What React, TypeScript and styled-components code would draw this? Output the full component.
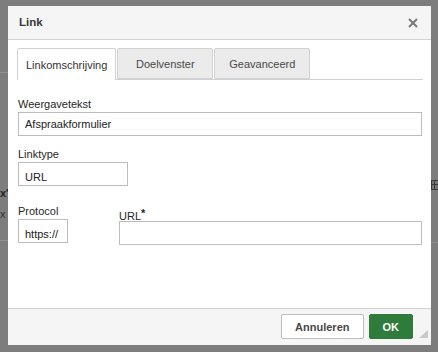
import React from "react";
import styled, { createGlobalStyle } from "styled-components";

const Global = createGlobalStyle`
  html, body { margin: 0; padding: 0; }
  body {
    background: #7d7d7d;
    font-family: "Liberation Sans", Arial, Helvetica, sans-serif;
    font-size: 11px;
    color: #262626;
    width: 438px;
    height: 352px;
    overflow: hidden;
    position: relative;
  }
`;

const Backdrop = styled.div`
  position: absolute;
  inset: 0;
  pointer-events: none;
`;

const BgLine = styled.div<{ $top: number; $left: number; $width: number }>`
  position: absolute;
  top: ${(p) => p.$top}px;
  left: ${(p) => p.$left}px;
  width: ${(p) => p.$width}px;
  height: 1px;
  background: #8e8e8e;
`;

const BgGlyph = styled.span<{ $top: number; $left: number; $bold?: boolean }>`
  position: absolute;
  top: ${(p) => p.$top}px;
  left: ${(p) => p.$left}px;
  font-size: 11px;
  font-weight: ${(p) => (p.$bold ? "bold" : "normal")};
  color: ${(p) => (p.$bold ? "#222" : "#333")};
  line-height: 1;
`;

const Page = styled.div`
  position: relative;
  padding: 6px 0 0 8px;
`;

const Dialog = styled.div`
  width: 423px;
  height: 339px;
  background: #fff;
  display: flex;
  flex-direction: column;
  position: relative;
  box-sizing: border-box;
`;

const Header = styled.div`
  height: 34px;
  box-sizing: border-box;
  background: #f5f5f5;
  border-bottom: 1px solid #d1d1d1;
  display: flex;
  align-items: center;
  justify-content: space-between;
  padding: 0 13px 0 11px;
`;

const Title = styled.div`
  font-weight: bold;
  font-size: 11.5px;
  color: #383838;
  padding-bottom: 1px;
`;

const Close = styled.div`
  width: 10px;
  height: 10px;
  display: flex;
  align-items: center;
  justify-content: center;
  margin-top: 1px;
`;

const Body = styled.div`
  flex: 1;
  padding: 8px 9px 0 10px;
`;

const TabBar = styled.div`
  display: flex;
  border-bottom: 1px solid #d1d1d1;
  margin-left: -1px;
  margin-right: -1px;
  height: 32px;
  box-sizing: border-box;
  align-items: flex-end;
`;

const Tab = styled.div<{ $active?: boolean }>`
  min-width: 96px;
  padding: 0 8px;
  box-sizing: border-box;
  height: ${(p) => (p.$active ? "32px" : "31px")};
  margin-bottom: ${(p) => (p.$active ? "-1px" : "0")};
  display: flex;
  align-items: center;
  justify-content: center;
  background: ${(p) => (p.$active ? "#fff" : "#ebebeb")};
  color: ${(p) => (p.$active ? "#333" : "#484848")};
  border: 1px solid #d1d1d1;
  border-bottom: ${(p) => (p.$active ? "none" : "1px solid #d1d1d1")};
  border-radius: 2px 2px 0 0;
  margin-right: 1px;
`;

const Field = styled.div<{ $top: number }>`
  display: flex;
  flex-direction: column;
  margin-top: ${(p) => p.$top}px;
`;

const Label = styled.label<{ $shift?: number }>`
  display: block;
  line-height: 13px;
  height: 13px;
  margin-bottom: 1px;
  margin-top: ${(p) => p.$shift ?? 0}px;
  color: #262626;
`;

const Req = styled.span`
  font-weight: bold;
  font-size: 11px;
  vertical-align: 3px;
`;

const Input = styled.div<{ $width?: number; $select?: boolean }>`
  box-sizing: border-box;
  height: 24px;
  width: ${(p) => (p.$width ? `${p.$width}px` : "100%")};
  border: 1px solid #bcbcbc;
  background: #fff;
  padding: ${(p) => (p.$select ? "5px 0 0 6px" : "0 6px")};
  display: flex;
  align-items: center;
  color: #222;
  overflow: hidden;
  white-space: nowrap;
`;

const Row = styled.div`
  display: grid;
  grid-template-columns: 50px 1fr;
  column-gap: 51px;
  margin-top: 19px;
  align-items: start;
`;

const Footer = styled.div`
  height: 37px;
  box-sizing: border-box;
  border-top: 1px solid #d1d1d1;
  background: #f5f5f5;
  display: flex;
  align-items: center;
  justify-content: flex-end;
  gap: 5px;
  padding: 0 18px 1px 0;
`;

const Button = styled.div<{ $primary?: boolean }>`
  height: 25px;
  box-sizing: border-box;
  border-radius: 2px;
  font-weight: bold;
  font-size: 11px;
  display: flex;
  align-items: center;
  justify-content: center;
  padding: 0 13px;
  background: ${(p) => (p.$primary ? "#2f7b3b" : "#fff")};
  border: 1px solid ${(p) => (p.$primary ? "#2f7b3b" : "#bcbcbc")};
  color: ${(p) => (p.$primary ? "#fff" : "#484848")};
  min-width: ${(p) => (p.$primary ? "42px" : "81px")};
`;

const Grip = styled.div`
  position: absolute;
  right: 3px;
  bottom: 7px;
  width: 0;
  height: 0;
  border-left: 9px solid transparent;
  border-bottom: 8px solid #c8c8c8;
`;

export default function App() {
  return (
    <>
      <Global />
      <Backdrop>
        <BgLine $top={72} $left={0} $width={8} />
        <BgLine $top={240} $left={0} $width={8} />
        <BgLine $top={242} $left={431} $width={7} />
        <BgGlyph $top={188} $left={0} $bold>x'</BgGlyph>
        <BgGlyph $top={209} $left={0}>x</BgGlyph>
        <svg style={{ position: "absolute", left: 431, top: 180 }} width="7" height="10" viewBox="0 0 7 10">
          <rect x="0" y="0" width="7" height="10" fill="#3a3a3a" />
          <rect x="1" y="1" width="2" height="3" fill="#777" />
          <rect x="4" y="1" width="3" height="3" fill="#777" />
          <rect x="1" y="5" width="2" height="4" fill="#777" />
          <rect x="4" y="5" width="3" height="4" fill="#777" />
        </svg>
      </Backdrop>
      <Page>
        <Dialog>
          <Header>
            <Title>Link</Title>
            <Close>
              <svg width="10" height="10" viewBox="0 0 10 10">
                <path d="M1 1 L9 9 M9 1 L1 9" stroke="#7a7a7a" strokeWidth="2" />
              </svg>
            </Close>
          </Header>
          <Body>
            <TabBar>
              <Tab $active>Linkomschrijving</Tab>
              <Tab>Doelvenster</Tab>
              <Tab>Geavanceerd</Tab>
            </TabBar>
            <Field $top={18}>
              <Label>Weergavetekst</Label>
              <Input>Afspraakformulier</Input>
            </Field>
            <Field $top={12}>
              <Label>Linktype</Label>
              <Input $width={110} $select>URL</Input>
            </Field>
            <Row>
              <Field $top={0}>
                <Label>Protocol</Label>
                <Input $width={50} $select>https://</Input>
              </Field>
              <Field $top={0}>
                <Label $shift={2}>
                  URL<Req>*</Req>
                </Label>
                <Input />
              </Field>
            </Row>
          </Body>
          <Footer>
            <Button>Annuleren</Button>
            <Button $primary>OK</Button>
          </Footer>
          <Grip />
        </Dialog>
      </Page>
    </>
  );
}
